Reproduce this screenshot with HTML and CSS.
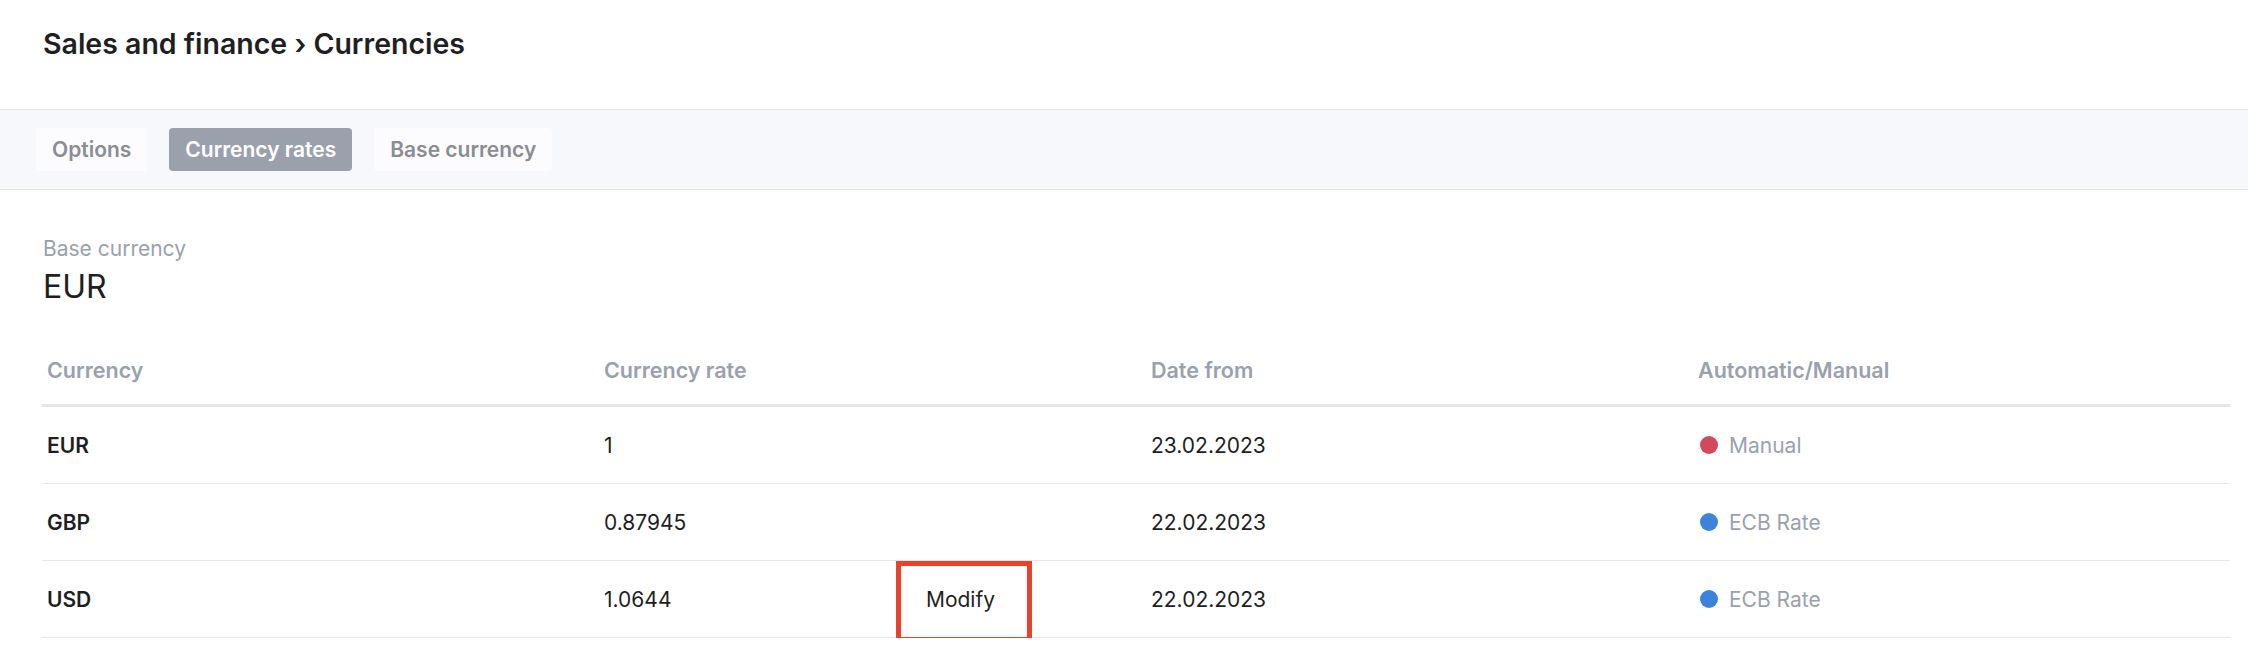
FILE: index.html
```html
<!DOCTYPE html>
<html lang="en">
<head>
  <meta charset="UTF-8">
  <meta name="viewport" content="width=device-width, initial-scale=1.0">
  <title>Currencies</title>

  <link rel="stylesheet" href="styles.css">
</head>
<body>
  <div id="header">
    <h1>Sales and finance › Currencies</h1>
  </div>

  <ul id="tabs">
    <li>Options</li>
    <li class="select">Currency rates</li>
    <li>Base currency</li>
  </ul>

  <div id="content">
    <div class="base">
      <span class="base-label">Base currency</span>
      <span class="base-value">EUR</span>
    </div>

    <div class="rates">
      <div class="row head">
        <div class="cell">Currency</div>
        <div class="cell">Currency rate</div>
        <div class="cell">Date from</div>
        <div class="cell">Automatic/Manual</div>
      </div>
      <div class="row">
        <div class="cell code">EUR</div>
        <div class="cell">1</div>
        <div class="cell">23.02.2023</div>
        <div class="cell status"><i class="dot manual"></i>Manual</div>
      </div>
      <div class="row">
        <div class="cell code">GBP</div>
        <div class="cell">0.87945</div>
        <div class="cell">22.02.2023</div>
        <div class="cell status"><i class="dot ecb"></i>ECB Rate</div>
      </div>
      <div class="row">
        <div class="cell code">USD</div>
        <div class="cell rate">1.0644 <span class="modify">Modify</span></div>
        <div class="cell">22.02.2023</div>
        <div class="cell status"><i class="dot ecb"></i>ECB Rate</div>
      </div>
    </div>
  </div>
</body>
</html>
```

FILE: styles.css
```css
*{
  margin: 0;
  padding: 0;
  box-sizing: border-box;
}

body{
  font-family: Inter, "Noto Sans", sans-serif;
  color: #1e1f22;
  background: #fff;
}

#header{
  height: 109px;
  padding: 26px 43px 0;
}
#header h1{
  font-size: 28.5px;
  line-height: 35px;
  font-weight: 600;
  color: #1e1f22;
}

#tabs{
  display: flex;
  gap: 22px;
  height: 81px;
  padding: 18px 36px 0;
  list-style: none;
  background: #f7f8fc;
  border-top: 1px solid #e3e5ea;
  border-bottom: 1px solid #e3e5ea;
}
#tabs>li{
  height: 43px;
  padding: 0 16px;
  line-height: 43px;
  font-size: 21px;
  font-weight: 600;
  color: #8a8d93;
  background: #fcfcfe;
  border-radius: 4px;
}
#tabs>.select{
  color: #fff;
  background: #9aa0ac;
}

#content{
  padding: 47px 18px 0 42px;
}

.base{
  display: flex;
  flex-direction: column;
  gap: 6px;
  padding-left: 1px;
}
.base-label{
  font-size: 21px;
  line-height: 24px;
  color: #9aa1ae;
}
.base-value{
  font-size: 32px;
  line-height: 40px;
  color: #1e1f22;
}

.rates{
  margin-top: 29px;
}
.row{
  display: grid;
  grid-template-columns: repeat(4, 1fr);
  align-items: center;
  height: 77px;
  font-size: 21px;
  border-bottom: 1px solid #e6e7ec;
}
.row.head{
  height: 71px;
  font-size: 21.5px;
  font-weight: 600;
  color: #9aa1ae;
  border-bottom: 3px solid #e3e6ee;
}
.cell{
  padding: 0 15px;
}
.cell:first-child{
  padding-left: 5px;
}
.code{
  font-weight: 600;
}
.rate{
  position: relative;
  align-self: stretch;
  display: flex;
  align-items: center;
}

/* red highlight around the action */
.modify{
  position: absolute;
  left: 307px;
  top: 0;
  width: 136px;
  height: 81px;
  padding: 0 7px 5px 0;
  display: flex;
  align-items: center;
  justify-content: center;
  border: 5px solid #e8432a;
  background: #fff;
}

.status{
  display: flex;
  align-items: center;
  gap: 11px;
  color: #9aa1ae;
}
.dot{
  display: inline-block;
  width: 18px;
  height: 18px;
  border-radius: 50%;
  margin-left: 2px;
}
.dot.manual{
  background: #d4485c;
}
.dot.ecb{
  background: #3b84dc;
}
```
